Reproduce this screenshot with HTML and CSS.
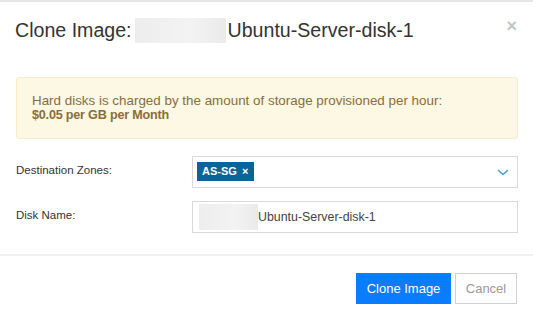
FILE: index.html
```html
<!DOCTYPE html>
<html>
<head>
<meta charset="utf-8">
<link rel="stylesheet" href="styles.css">
</head>
<body>
<div class="modal">
  <div class="header">
    <h4 class="title">Clone Image:<span class="redact redact-title"></span>Ubuntu-Server-disk-1</h4>
    <span class="close">×</span>
  </div>
  <div class="body">
    <div class="alert">
      <div>Hard disks is charged by the amount of storage provisioned per hour:</div>
      <div class="price">$0.05 per GB per Month</div>
    </div>
    <div class="form">
      <label class="label">Destination Zones:</label>
      <div class="select">
        <span class="tag">AS-SG <span class="tag-x">×</span></span>
        <svg class="chev" width="12" height="7" viewBox="0 0 12 7"><path d="M1 1 L6 5.5 L11 1" fill="none" stroke="#4a9fe8" stroke-width="1.6"/></svg>
      </div>
      <label class="label">Disk Name:</label>
      <div class="input"><span class="redact redact-input"></span>Ubuntu-Server-disk-1</div>
    </div>
  </div>
  <div class="footer">
    <button class="btn btn-primary">Clone Image</button>
    <button class="btn btn-default">Cancel</button>
  </div>
</div>
</body>
</html>
```
FILE: styles.css
```css
html, body {
  margin: 0;
  padding: 0;
  background: #fff;
}
body {
  font-family: "Liberation Sans", Arial, sans-serif;
  color: #333;
  width: 533px;
  height: 320px;
  overflow: hidden;
}
.modal {
  border-top: 2px solid #e6e6e6;
}
.header {
  display: flex;
  justify-content: space-between;
  align-items: flex-start;
  padding: 14px 16px 16px 15px;
}
.title {
  margin: 0;
  font-size: 19.6px;
  font-weight: normal;
  line-height: 28px;
  color: #333;
  white-space: nowrap;
}
.redact {
  display: inline-block;
  background: linear-gradient(90deg, #ededed, #f3f3f3 60%, #eaeaea);
  filter: blur(0.6px);
}
.redact-title {
  width: 91px;
  height: 25px;
  vertical-align: -6px;
  margin: 0 2px 0 3px;
}
.close {
  font-size: 18px;
  font-weight: bold;
  line-height: 18px;
  color: #c4c4c4;
  margin-top: 1px;
}
.body {
  padding: 17px 15px 0 16px;
}
.alert {
  background: #fcf8e3;
  border: 1px solid #faebcc;
  border-radius: 3px;
  color: #8a6d3b;
  font-size: 13.4px;
  line-height: 15px;
  padding: 15px 13px 15px 15px;
}
.price {
  font-weight: bold;
  font-size: 12.6px;
  letter-spacing: -0.2px;
}
.form {
  display: grid;
  grid-template-columns: 176px 1fr;
  row-gap: 13px;
  align-items: center;
  margin-top: 17px;
}
.label {
  font-size: 11.5px;
  color: #333;
  padding-bottom: 4px;
}
.select {
  height: 30px;
  border: 1px solid #d9d9d9;
  display: flex;
  align-items: flex-start;
  padding: 0 8px 0 4px;
  justify-content: space-between;
}
.tag {
  margin-top: 5px;
  height: 19px;
  line-height: 19px;
  background: #0a6496;
  color: #fff;
  font-size: 11px;
  font-weight: bold;
  padding: 0 6px 0 5px;
}
.tag-x {
  margin-left: 2px;
}
.chev {
  margin-top: 12px;
}
.input {
  height: 30px;
  border: 1px solid #d9d9d9;
  display: flex;
  align-items: center;
  padding: 0 6px;
  font-size: 12.4px;
  color: #444;
}
.redact-input {
  width: 59px;
  height: 26px;
}
.footer {
  margin-top: 21px;
  border-top: 2px solid #f2f2f2;
  padding: 17px 16px 0 0;
  display: flex;
  justify-content: flex-end;
  gap: 4px;
}
.btn {
  height: 31px;
  font-family: "Liberation Sans", Arial, sans-serif;
  font-size: 13px;
  border-radius: 0;
  cursor: pointer;
}
.btn-primary {
  width: 95px;
  background: #0a7cff;
  border: 1px solid #0a7cff;
  color: #fff;
}
.btn-default {
  width: 62px;
  background: #fff;
  border: 1px solid #d0d0d0;
  color: #999;
}
```
